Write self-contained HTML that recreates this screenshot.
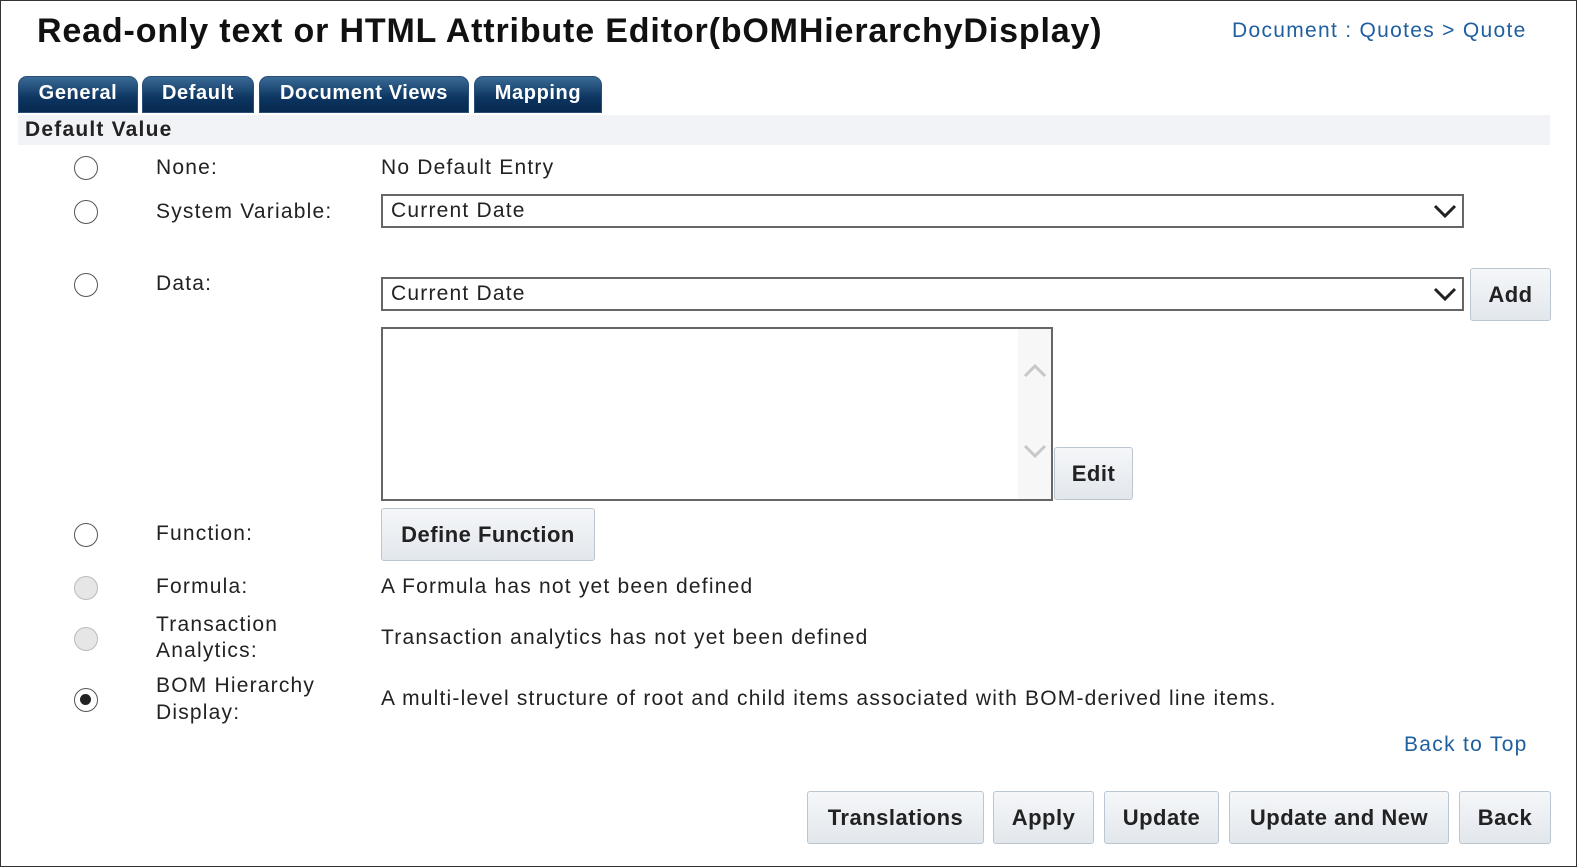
<!DOCTYPE html><html><head><style>
body{margin:0;width:1577px;height:867px;position:relative;font-family:"Liberation Sans",Arial,sans-serif;color:#222;background:#fff;overflow:hidden}
.frame{position:absolute;left:0;top:0;width:1575px;height:865px;border:1px solid #333}
.a{position:absolute;white-space:nowrap}
.tab{position:absolute;top:76px;height:37px;border-radius:9px 9px 0 0;background:linear-gradient(#3a6a96,#0c3560 60%,#072a50);color:#fff;font-weight:bold;font-size:20px;letter-spacing:0.6px;text-align:center;line-height:32px;border:1px solid #2a4f78;box-sizing:border-box}
.r{position:absolute;left:74px;width:24px;height:24px;border:1.5px solid #555;border-radius:50%;box-sizing:border-box;background:#fff}
.r.dis{border-color:#bbb;background:#e6e6e6}
.t{font-size:21px;letter-spacing:1.2px;position:absolute;white-space:nowrap}
.sel{position:absolute;left:381px;width:1083px;height:34px;border:2px solid #666;box-sizing:border-box;font-size:21px;letter-spacing:1.2px;line-height:30px;padding-left:8px}
.btn{position:absolute;height:53px;border:1px solid #bcc6d0;border-radius:3px;background:linear-gradient(#f5f7f9,#e2e7ec);font-weight:bold;font-size:22px;letter-spacing:0.5px;text-align:center;line-height:51px;box-sizing:border-box;color:#222}
.link{color:#1f5f9f;font-size:21px;letter-spacing:1.3px;position:absolute;white-space:nowrap}
</style></head><body><div class="frame"></div>
<div class="a" style="left:37px;top:12px;font-size:34px;letter-spacing:0.85px;font-weight:bold;color:#111">Read-only text or HTML Attribute Editor(bOMHierarchyDisplay)</div>
<div class="link" style="left:1232px;top:19px">Document : Quotes &gt; Quote</div>
<div class="tab" style="left:18px;width:120px">General</div>
<div class="tab" style="left:142px;width:112px">Default</div>
<div class="tab" style="left:259px;width:210px">Document Views</div>
<div class="tab" style="left:474px;width:128px">Mapping</div>
<div class="a" style="left:18px;top:115px;width:1532px;height:30px;background:#f2f3f6"></div>
<div class="a" style="left:25px;top:118px;font-size:21px;letter-spacing:1.2px;font-weight:bold">Default Value</div>
<div class="r" style="top:156px"></div><div class="t" style="left:156px;top:156px">None:</div><div class="t" style="left:381px;top:156px">No Default Entry</div>
<div class="r" style="top:200px"></div><div class="t" style="left:156px;top:200px">System Variable:</div>
<div class="sel" style="top:194px">Current Date</div>
<svg class="a" style="left:1433px;top:203px" width="24" height="16"><path d="M2 3 L12 13 L22 3" stroke="#222" stroke-width="3" fill="none"/></svg>
<div class="r" style="top:273px"></div><div class="t" style="left:156px;top:272px">Data:</div>
<div class="sel" style="top:277px">Current Date</div>
<svg class="a" style="left:1433px;top:286px" width="24" height="16"><path d="M2 3 L12 13 L22 3" stroke="#222" stroke-width="3" fill="none"/></svg>
<div class="btn" style="left:1470px;top:268px;width:81px">Add</div>
<div class="a" style="left:381px;top:327px;width:672px;height:174px;border:2px solid #666;box-sizing:border-box"><div style="position:absolute;right:0;top:0;width:33px;height:100%;background:#f7f7f7"></div></div>
<svg class="a" style="left:1022px;top:362px" width="26" height="100"><path d="M3 14 L13 4 L23 14" stroke="#c8c8c8" stroke-width="3" fill="none"/><path d="M3 84 L13 94 L23 84" stroke="#c8c8c8" stroke-width="3" fill="none"/></svg>
<div class="btn" style="left:1054px;top:447px;width:79px">Edit</div>
<div class="r" style="top:523px"></div><div class="t" style="left:156px;top:522px">Function:</div>
<div class="btn" style="left:381px;top:508px;width:214px">Define Function</div>
<div class="r dis" style="top:576px"></div><div class="t" style="left:156px;top:575px">Formula:</div><div class="t" style="left:381px;top:575px">A Formula has not yet been defined</div>
<div class="r dis" style="top:627px"></div><div class="t" style="left:156px;top:612px;line-height:26px">Transaction<br>Analytics:</div><div class="t" style="left:381px;top:626px">Transaction analytics has not yet been defined</div>
<div class="r" style="top:688px"><div style="position:absolute;left:5px;top:5px;width:11px;height:11px;border-radius:50%;background:#222"></div></div>
<div class="t" style="left:156px;top:672px;line-height:27px">BOM Hierarchy<br>Display:</div><div class="t" style="left:381px;top:687px">A multi-level structure of root and child items associated with BOM-derived line items.</div>
<div class="link" style="left:1404px;top:733px">Back to Top</div>
<div class="btn" style="left:807px;top:791px;width:177px">Translations</div>
<div class="btn" style="left:993px;top:791px;width:101px">Apply</div>
<div class="btn" style="left:1104px;top:791px;width:115px">Update</div>
<div class="btn" style="left:1229px;top:791px;width:220px">Update and New</div>
<div class="btn" style="left:1459px;top:791px;width:92px">Back</div>
</body></html>
